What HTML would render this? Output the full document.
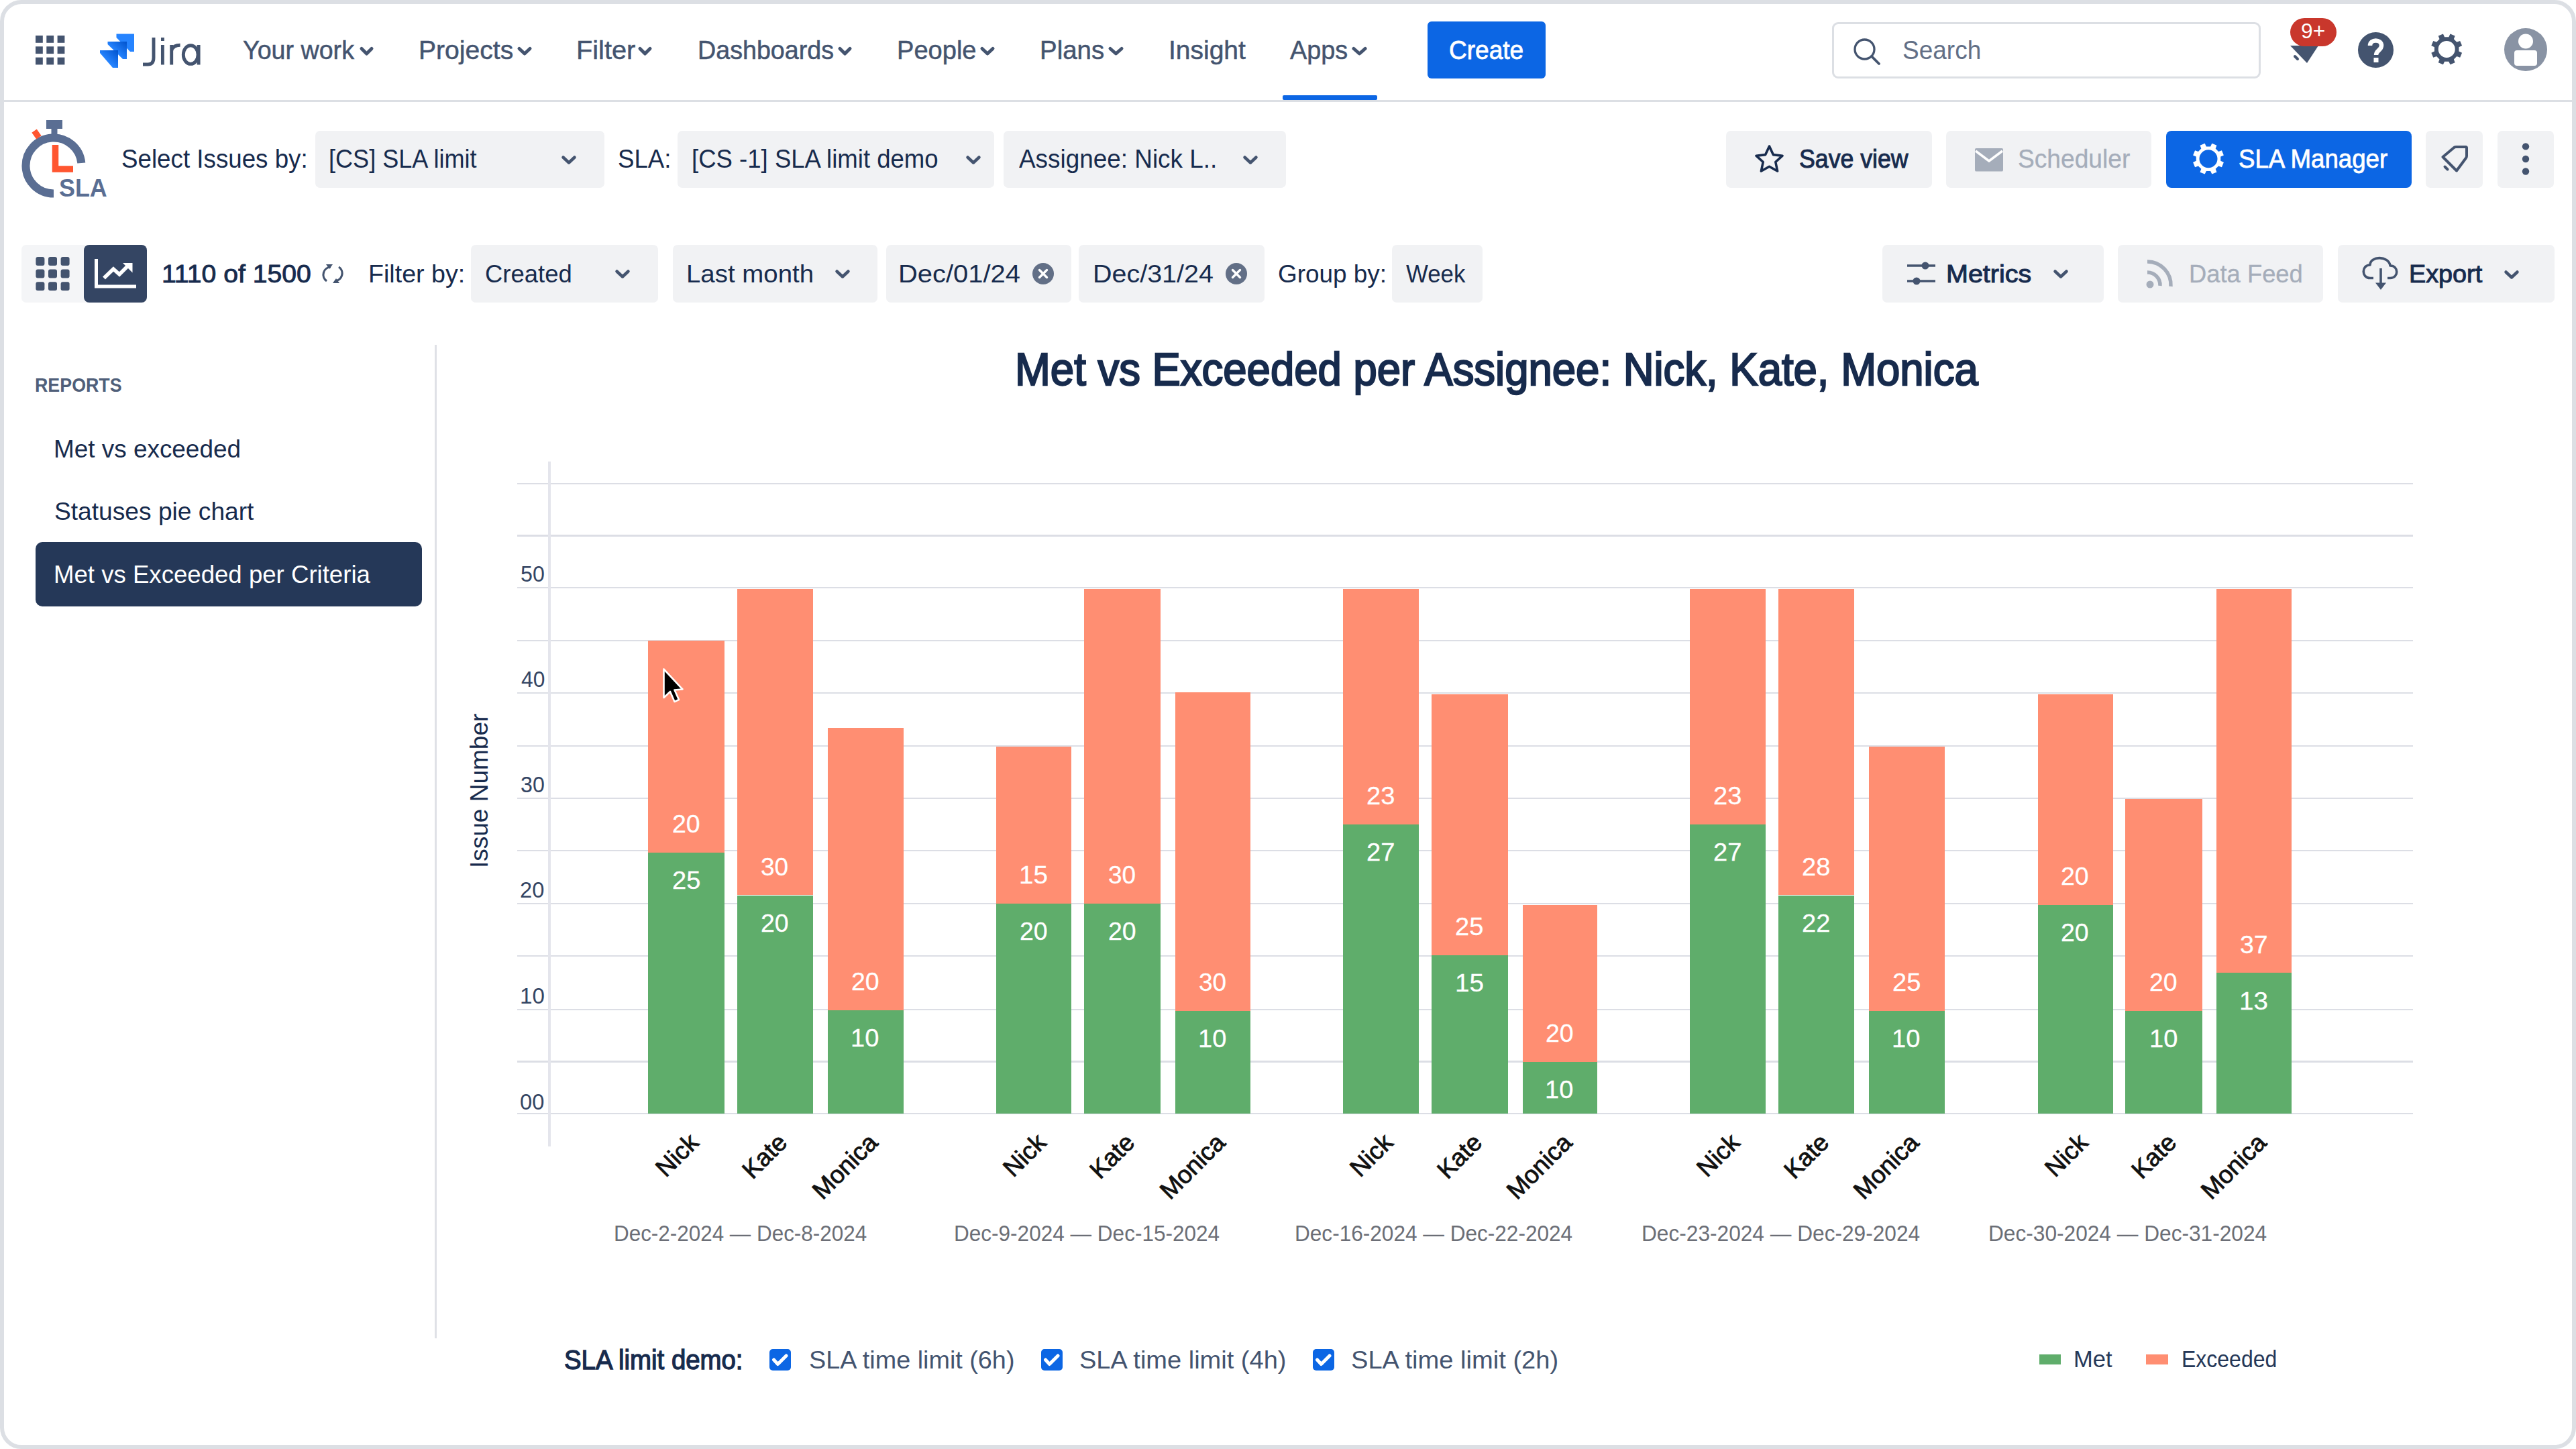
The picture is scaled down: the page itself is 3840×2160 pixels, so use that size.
<!DOCTYPE html>
<html><head><meta charset="utf-8"><title>SLA Time and Report</title>
<style>
html,body{margin:0;padding:0;background:#fff;}
body{width:3840px;height:2160px;position:relative;overflow:hidden;font-family:"Liberation Sans", sans-serif;}
.t{position:absolute;white-space:nowrap;line-height:0;transform-origin:0 0;}
svg{overflow:visible;}

</style></head><body>
<div style="position:absolute;left:2128px;top:32px;width:176px;height:85px;background:#0c66e4;border-radius:6px;"></div>
<div style="position:absolute;left:2731px;top:33px;width:633px;height:78px;border:3px solid #dcdfe4;border-radius:9px;background:#fff"></div>
<div style="position:absolute;left:469.5px;top:195px;width:431.5px;height:85px;background:#f1f2f4;border-radius:7px;"></div>
<div style="position:absolute;left:1010px;top:195px;width:472px;height:85px;background:#f1f2f4;border-radius:7px;"></div>
<div style="position:absolute;left:1496px;top:195px;width:421px;height:85px;background:#f1f2f4;border-radius:7px;"></div>
<div style="position:absolute;left:2573px;top:195px;width:307px;height:85px;background:#f1f2f4;border-radius:7px;"></div>
<div style="position:absolute;left:2901px;top:195px;width:306px;height:85px;background:#f1f2f4;border-radius:7px;"></div>
<div style="position:absolute;left:3229px;top:194.5px;width:366px;height:85.0px;background:#0c66e4;border-radius:8px;"></div>
<div style="position:absolute;left:3616px;top:195px;width:85px;height:85px;background:#f1f2f4;border-radius:7px;"></div>
<div style="position:absolute;left:3723px;top:195px;width:84px;height:85px;background:#f1f2f4;border-radius:7px;"></div>
<div style="position:absolute;left:32px;top:365px;width:186.5px;height:85.5px;background:#f4f5f7;border-radius:7px;"></div>
<div style="position:absolute;left:125px;top:365px;width:93.5px;height:85.5px;background:#344563;border-radius:8px;"></div>
<div style="position:absolute;left:702px;top:365px;width:279px;height:85.5px;background:#f1f2f4;border-radius:7px;"></div>
<div style="position:absolute;left:1003px;top:365px;width:305px;height:85.5px;background:#f1f2f4;border-radius:7px;"></div>
<div style="position:absolute;left:1321px;top:365px;width:276px;height:85.5px;background:#f1f2f4;border-radius:7px;"></div>
<div style="position:absolute;left:1608px;top:365px;width:277px;height:85.5px;background:#f1f2f4;border-radius:7px;"></div>
<div style="position:absolute;left:2075px;top:365px;width:135px;height:85.5px;background:#f1f2f4;border-radius:7px;"></div>
<div style="position:absolute;left:2806px;top:365px;width:330px;height:85.5px;background:#f1f2f4;border-radius:7px;"></div>
<div style="position:absolute;left:3157px;top:365px;width:306px;height:85.5px;background:#f1f2f4;border-radius:7px;"></div>
<div style="position:absolute;left:3485px;top:365px;width:322.5px;height:85.5px;background:#f1f2f4;border-radius:7px;"></div>
<div style="position:absolute;left:53px;top:808px;width:576px;height:96px;background:#253858;border-radius:10px;"></div>
<div style="position:absolute;left:648px;top:514px;width:3px;height:1481px;background:#dfe1e6;border-radius:0px;"></div>
<div style="position:absolute;left:3040px;top:2018.7px;width:32px;height:15.299999999999955px;background:#5fad6b;border-radius:0px;"></div>
<div style="position:absolute;left:3199px;top:2018.7px;width:33px;height:15.299999999999955px;background:#ff8e72;border-radius:0px;"></div>
<div style="position:absolute;left:0px;top:149px;width:3840px;height:2.8000000000000114px;background:#dcdfe4;border-radius:0px;"></div>
<div style="position:absolute;left:771px;top:1658.9px;width:2826px;height:2.199999999999818px;background:#dcdee5;border-radius:0px;"></div>
<div style="position:absolute;left:771px;top:1581.4px;width:2826px;height:2.199999999999818px;background:#dcdee5;border-radius:0px;"></div>
<div style="position:absolute;left:771px;top:1503.9px;width:2826px;height:2.199999999999818px;background:#dcdee5;border-radius:0px;"></div>
<div style="position:absolute;left:771px;top:1423.9px;width:2826px;height:2.199999999999818px;background:#dcdee5;border-radius:0px;"></div>
<div style="position:absolute;left:771px;top:1345.9px;width:2826px;height:2.199999999999818px;background:#dcdee5;border-radius:0px;"></div>
<div style="position:absolute;left:771px;top:1266.9px;width:2826px;height:2.199999999999818px;background:#dcdee5;border-radius:0px;"></div>
<div style="position:absolute;left:771px;top:1188.9px;width:2826px;height:2.199999999999818px;background:#dcdee5;border-radius:0px;"></div>
<div style="position:absolute;left:771px;top:1110.9px;width:2826px;height:2.199999999999818px;background:#dcdee5;border-radius:0px;"></div>
<div style="position:absolute;left:771px;top:1031.9px;width:2826px;height:2.199999999999818px;background:#dcdee5;border-radius:0px;"></div>
<div style="position:absolute;left:771px;top:953.9px;width:2826px;height:2.2000000000000455px;background:#dcdee5;border-radius:0px;"></div>
<div style="position:absolute;left:771px;top:874.9px;width:2826px;height:2.2000000000000455px;background:#dcdee5;border-radius:0px;"></div>
<div style="position:absolute;left:771px;top:797.4px;width:2826px;height:2.2000000000000455px;background:#dcdee5;border-radius:0px;"></div>
<div style="position:absolute;left:771px;top:719.9px;width:2826px;height:2.2000000000000455px;background:#dcdee5;border-radius:0px;"></div>
<div style="position:absolute;left:817px;top:688px;width:3.5px;height:1021px;background:#e4e5ec;border-radius:0px;"></div>
<div style="position:absolute;left:1912px;top:142px;width:141px;height:7px;background:#0c66e4;border-radius:2px;"></div>
<div style="position:absolute;left:966px;top:955px;width:114px;height:316px;background:#ff8e72;border-radius:0px;"></div>
<div style="position:absolute;left:966px;top:1271px;width:114px;height:389px;background:#5fad6b;border-radius:0px;"></div>
<div style="position:absolute;left:1098.5px;top:877.7px;width:113.0px;height:456.79999999999995px;background:#ff8e72;border-radius:0px;"></div>
<div style="position:absolute;left:1098.5px;top:1334.5px;width:113.0px;height:325.5px;background:#5fad6b;border-radius:0px;"></div>
<div style="position:absolute;left:1233.6px;top:1085px;width:113.10000000000014px;height:420.5px;background:#ff8e72;border-radius:0px;"></div>
<div style="position:absolute;left:1233.6px;top:1505.5px;width:113.10000000000014px;height:154.5px;background:#5fad6b;border-radius:0px;"></div>
<div style="position:absolute;left:1484.6px;top:1112.5px;width:112.40000000000009px;height:234.5px;background:#ff8e72;border-radius:0px;"></div>
<div style="position:absolute;left:1484.6px;top:1347px;width:112.40000000000009px;height:313px;background:#5fad6b;border-radius:0px;"></div>
<div style="position:absolute;left:1616px;top:877.7px;width:114px;height:469.29999999999995px;background:#ff8e72;border-radius:0px;"></div>
<div style="position:absolute;left:1616px;top:1347px;width:114px;height:313px;background:#5fad6b;border-radius:0px;"></div>
<div style="position:absolute;left:1752px;top:1032px;width:112px;height:475px;background:#ff8e72;border-radius:0px;"></div>
<div style="position:absolute;left:1752px;top:1507px;width:112px;height:153px;background:#5fad6b;border-radius:0px;"></div>
<div style="position:absolute;left:2001.7px;top:877.7px;width:113.10000000000014px;height:351.29999999999995px;background:#ff8e72;border-radius:0px;"></div>
<div style="position:absolute;left:2001.7px;top:1229px;width:113.10000000000014px;height:431px;background:#5fad6b;border-radius:0px;"></div>
<div style="position:absolute;left:2134px;top:1034.8px;width:113.5px;height:389.0px;background:#ff8e72;border-radius:0px;"></div>
<div style="position:absolute;left:2134px;top:1423.8px;width:113.5px;height:236.20000000000005px;background:#5fad6b;border-radius:0px;"></div>
<div style="position:absolute;left:2269.6px;top:1349px;width:111.30000000000018px;height:234px;background:#ff8e72;border-radius:0px;"></div>
<div style="position:absolute;left:2269.6px;top:1583px;width:111.30000000000018px;height:77px;background:#5fad6b;border-radius:0px;"></div>
<div style="position:absolute;left:2518.8px;top:877.7px;width:113.09999999999991px;height:351.29999999999995px;background:#ff8e72;border-radius:0px;"></div>
<div style="position:absolute;left:2518.8px;top:1229px;width:113.09999999999991px;height:431px;background:#5fad6b;border-radius:0px;"></div>
<div style="position:absolute;left:2651px;top:877.7px;width:113px;height:456.79999999999995px;background:#ff8e72;border-radius:0px;"></div>
<div style="position:absolute;left:2651px;top:1334.5px;width:113px;height:325.5px;background:#5fad6b;border-radius:0px;"></div>
<div style="position:absolute;left:2786px;top:1112.5px;width:112.59999999999991px;height:394.20000000000005px;background:#ff8e72;border-radius:0px;"></div>
<div style="position:absolute;left:2786px;top:1506.7px;width:112.59999999999991px;height:153.29999999999995px;background:#5fad6b;border-radius:0px;"></div>
<div style="position:absolute;left:3037.7px;top:1034.8px;width:111.90000000000009px;height:314.20000000000005px;background:#ff8e72;border-radius:0px;"></div>
<div style="position:absolute;left:3037.7px;top:1349px;width:111.90000000000009px;height:311px;background:#5fad6b;border-radius:0px;"></div>
<div style="position:absolute;left:3168px;top:1191.3px;width:115px;height:315.4000000000001px;background:#ff8e72;border-radius:0px;"></div>
<div style="position:absolute;left:3168px;top:1506.7px;width:115px;height:153.29999999999995px;background:#5fad6b;border-radius:0px;"></div>
<div style="position:absolute;left:3303.8px;top:877.7px;width:112.39999999999964px;height:572.7px;background:#ff8e72;border-radius:0px;"></div>
<div style="position:absolute;left:3303.8px;top:1450.4px;width:112.39999999999964px;height:209.5999999999999px;background:#5fad6b;border-radius:0px;"></div>
<div class="t" style="left:1001.74px;top:1229.19px;font-size:36.98px;color:#ffffff;transform:scaleX(1.0136);-webkit-text-stroke:0.3px #ffffff;">20</div>
<div class="t" style="left:1001.72px;top:1313.19px;font-size:36.98px;color:#ffffff;transform:scaleX(1.0291);-webkit-text-stroke:0.3px #ffffff;">25</div>
<div class="t" style="left:1134.35px;top:1292.69px;font-size:36.98px;color:#ffffff;transform:scaleX(0.9986);-webkit-text-stroke:0.3px #ffffff;">30</div>
<div class="t" style="left:1133.74px;top:1376.69px;font-size:36.98px;color:#ffffff;transform:scaleX(1.0136);-webkit-text-stroke:0.3px #ffffff;">20</div>
<div class="t" style="left:1268.89px;top:1463.69px;font-size:36.98px;color:#ffffff;transform:scaleX(1.0136);-webkit-text-stroke:0.3px #ffffff;">20</div>
<div class="t" style="left:1268.27px;top:1547.69px;font-size:36.98px;color:#ffffff;transform:scaleX(1.0291);-webkit-text-stroke:0.3px #ffffff;">10</div>
<div class="t" style="left:1518.88px;top:1305.19px;font-size:36.98px;color:#ffffff;transform:scaleX(1.0450);-webkit-text-stroke:0.3px #ffffff;">15</div>
<div class="t" style="left:1519.54px;top:1389.19px;font-size:36.98px;color:#ffffff;transform:scaleX(1.0136);-webkit-text-stroke:0.3px #ffffff;">20</div>
<div class="t" style="left:1652.35px;top:1305.19px;font-size:36.98px;color:#ffffff;transform:scaleX(0.9986);-webkit-text-stroke:0.3px #ffffff;">30</div>
<div class="t" style="left:1651.74px;top:1389.19px;font-size:36.98px;color:#ffffff;transform:scaleX(1.0136);-webkit-text-stroke:0.3px #ffffff;">20</div>
<div class="t" style="left:1787.35px;top:1465.19px;font-size:36.98px;color:#ffffff;transform:scaleX(0.9986);-webkit-text-stroke:0.3px #ffffff;">30</div>
<div class="t" style="left:1786.12px;top:1549.19px;font-size:36.98px;color:#ffffff;transform:scaleX(1.0291);-webkit-text-stroke:0.3px #ffffff;">10</div>
<div class="t" style="left:2036.97px;top:1187.19px;font-size:36.98px;color:#ffffff;transform:scaleX(1.0291);-webkit-text-stroke:0.3px #ffffff;">23</div>
<div class="t" style="left:2036.97px;top:1271.19px;font-size:36.98px;color:#ffffff;transform:scaleX(1.0291);-webkit-text-stroke:0.3px #ffffff;">27</div>
<div class="t" style="left:2169.47px;top:1381.99px;font-size:36.98px;color:#ffffff;transform:scaleX(1.0291);-webkit-text-stroke:0.3px #ffffff;">25</div>
<div class="t" style="left:2168.83px;top:1465.99px;font-size:36.98px;color:#ffffff;transform:scaleX(1.0450);-webkit-text-stroke:0.3px #ffffff;">15</div>
<div class="t" style="left:2303.99px;top:1541.19px;font-size:36.98px;color:#ffffff;transform:scaleX(1.0136);-webkit-text-stroke:0.3px #ffffff;">20</div>
<div class="t" style="left:2303.37px;top:1625.19px;font-size:36.98px;color:#ffffff;transform:scaleX(1.0291);-webkit-text-stroke:0.3px #ffffff;">10</div>
<div class="t" style="left:2554.07px;top:1187.19px;font-size:36.98px;color:#ffffff;transform:scaleX(1.0291);-webkit-text-stroke:0.3px #ffffff;">23</div>
<div class="t" style="left:2554.07px;top:1271.19px;font-size:36.98px;color:#ffffff;transform:scaleX(1.0291);-webkit-text-stroke:0.3px #ffffff;">27</div>
<div class="t" style="left:2686.22px;top:1292.69px;font-size:36.98px;color:#ffffff;transform:scaleX(1.0291);-webkit-text-stroke:0.3px #ffffff;">28</div>
<div class="t" style="left:2686.22px;top:1376.69px;font-size:36.98px;color:#ffffff;transform:scaleX(1.0291);-webkit-text-stroke:0.3px #ffffff;">22</div>
<div class="t" style="left:2821.02px;top:1464.89px;font-size:36.98px;color:#ffffff;transform:scaleX(1.0291);-webkit-text-stroke:0.3px #ffffff;">25</div>
<div class="t" style="left:2820.42px;top:1548.89px;font-size:36.98px;color:#ffffff;transform:scaleX(1.0291);-webkit-text-stroke:0.3px #ffffff;">10</div>
<div class="t" style="left:3072.39px;top:1307.19px;font-size:36.98px;color:#ffffff;transform:scaleX(1.0136);-webkit-text-stroke:0.3px #ffffff;">20</div>
<div class="t" style="left:3072.39px;top:1391.19px;font-size:36.98px;color:#ffffff;transform:scaleX(1.0136);-webkit-text-stroke:0.3px #ffffff;">20</div>
<div class="t" style="left:3204.24px;top:1464.89px;font-size:36.98px;color:#ffffff;transform:scaleX(1.0136);-webkit-text-stroke:0.3px #ffffff;">20</div>
<div class="t" style="left:3203.62px;top:1548.89px;font-size:36.98px;color:#ffffff;transform:scaleX(1.0291);-webkit-text-stroke:0.3px #ffffff;">10</div>
<div class="t" style="left:3339.33px;top:1408.59px;font-size:36.98px;color:#ffffff;transform:scaleX(1.0136);-webkit-text-stroke:0.3px #ffffff;">37</div>
<div class="t" style="left:3338.08px;top:1492.59px;font-size:36.98px;color:#ffffff;transform:scaleX(1.0450);-webkit-text-stroke:0.3px #ffffff;">13</div>
<div style="position:absolute;left:714.5px;top:1181.5px;width:0;height:0;"><div style="position:absolute;left:0;top:0;transform:rotate(-90deg);"><div id="ytitle" style="position:absolute;left:-112px;top:0;white-space:nowrap;line-height:0;font-size:37px;color:#172b4d;">Issue Number</div></div></div>
<div style="position:absolute;left:1035.0px;top:1697px;width:0;height:0;transform:rotate(-45deg);transform-origin:0 0;"><div style="position:absolute;right:0;top:0;white-space:nowrap;line-height:0;font-size:37px;color:#111;-webkit-text-stroke:0.9px #111;">Nick</div></div>
<div style="position:absolute;left:1167.0px;top:1697px;width:0;height:0;transform:rotate(-45deg);transform-origin:0 0;"><div style="position:absolute;right:0;top:0;white-space:nowrap;line-height:0;font-size:37px;color:#111;-webkit-text-stroke:0.9px #111;">Kate</div></div>
<div style="position:absolute;left:1302.2px;top:1697px;width:0;height:0;transform:rotate(-45deg);transform-origin:0 0;"><div style="position:absolute;right:0;top:0;white-space:nowrap;line-height:0;font-size:37px;color:#111;-webkit-text-stroke:0.9px #111;">Monica</div></div>
<div style="position:absolute;left:1552.8px;top:1697px;width:0;height:0;transform:rotate(-45deg);transform-origin:0 0;"><div style="position:absolute;right:0;top:0;white-space:nowrap;line-height:0;font-size:37px;color:#111;-webkit-text-stroke:0.9px #111;">Nick</div></div>
<div style="position:absolute;left:1685.0px;top:1697px;width:0;height:0;transform:rotate(-45deg);transform-origin:0 0;"><div style="position:absolute;right:0;top:0;white-space:nowrap;line-height:0;font-size:37px;color:#111;-webkit-text-stroke:0.9px #111;">Kate</div></div>
<div style="position:absolute;left:1820.0px;top:1697px;width:0;height:0;transform:rotate(-45deg);transform-origin:0 0;"><div style="position:absolute;right:0;top:0;white-space:nowrap;line-height:0;font-size:37px;color:#111;-webkit-text-stroke:0.9px #111;">Monica</div></div>
<div style="position:absolute;left:2070.2px;top:1697px;width:0;height:0;transform:rotate(-45deg);transform-origin:0 0;"><div style="position:absolute;right:0;top:0;white-space:nowrap;line-height:0;font-size:37px;color:#111;-webkit-text-stroke:0.9px #111;">Nick</div></div>
<div style="position:absolute;left:2202.8px;top:1697px;width:0;height:0;transform:rotate(-45deg);transform-origin:0 0;"><div style="position:absolute;right:0;top:0;white-space:nowrap;line-height:0;font-size:37px;color:#111;-webkit-text-stroke:0.9px #111;">Kate</div></div>
<div style="position:absolute;left:2337.2px;top:1697px;width:0;height:0;transform:rotate(-45deg);transform-origin:0 0;"><div style="position:absolute;right:0;top:0;white-space:nowrap;line-height:0;font-size:37px;color:#111;-webkit-text-stroke:0.9px #111;">Monica</div></div>
<div style="position:absolute;left:2587.4px;top:1697px;width:0;height:0;transform:rotate(-45deg);transform-origin:0 0;"><div style="position:absolute;right:0;top:0;white-space:nowrap;line-height:0;font-size:37px;color:#111;-webkit-text-stroke:0.9px #111;">Nick</div></div>
<div style="position:absolute;left:2719.5px;top:1697px;width:0;height:0;transform:rotate(-45deg);transform-origin:0 0;"><div style="position:absolute;right:0;top:0;white-space:nowrap;line-height:0;font-size:37px;color:#111;-webkit-text-stroke:0.9px #111;">Kate</div></div>
<div style="position:absolute;left:2854.3px;top:1697px;width:0;height:0;transform:rotate(-45deg);transform-origin:0 0;"><div style="position:absolute;right:0;top:0;white-space:nowrap;line-height:0;font-size:37px;color:#111;-webkit-text-stroke:0.9px #111;">Monica</div></div>
<div style="position:absolute;left:3105.6px;top:1697px;width:0;height:0;transform:rotate(-45deg);transform-origin:0 0;"><div style="position:absolute;right:0;top:0;white-space:nowrap;line-height:0;font-size:37px;color:#111;-webkit-text-stroke:0.9px #111;">Nick</div></div>
<div style="position:absolute;left:3237.5px;top:1697px;width:0;height:0;transform:rotate(-45deg);transform-origin:0 0;"><div style="position:absolute;right:0;top:0;white-space:nowrap;line-height:0;font-size:37px;color:#111;-webkit-text-stroke:0.9px #111;">Kate</div></div>
<div style="position:absolute;left:3372.0px;top:1697px;width:0;height:0;transform:rotate(-45deg);transform-origin:0 0;"><div style="position:absolute;right:0;top:0;white-space:nowrap;line-height:0;font-size:37px;color:#111;-webkit-text-stroke:0.9px #111;">Monica</div></div>
<div class="t" style="left:362.41px;top:74.79px;font-size:38.12px;color:#44546f;transform:scaleX(0.9876);-webkit-text-stroke:0.5px #44546f;">Your work</div>
<div class="t" style="left:623.94px;top:74.79px;font-size:38.12px;color:#44546f;transform:scaleX(1.0261);-webkit-text-stroke:0.5px #44546f;">Projects</div>
<div class="t" style="left:858.90px;top:74.79px;font-size:38.12px;color:#44546f;transform:scaleX(1.0425);-webkit-text-stroke:0.5px #44546f;">Filter</div>
<div class="t" style="left:1040.06px;top:74.79px;font-size:38.12px;color:#44546f;transform:scaleX(0.9883);-webkit-text-stroke:0.5px #44546f;">Dashboards</div>
<div class="t" style="left:1337.03px;top:74.79px;font-size:38.12px;color:#44546f;transform:scaleX(0.9986);-webkit-text-stroke:0.5px #44546f;">People</div>
<div class="t" style="left:1550.00px;top:74.79px;font-size:38.12px;color:#44546f;transform:scaleX(1.0090);-webkit-text-stroke:0.5px #44546f;">Plans</div>
<div class="t" style="left:1741.95px;top:74.79px;font-size:38.12px;color:#44546f;transform:scaleX(1.0233);-webkit-text-stroke:0.5px #44546f;">Insight</div>
<div class="t" style="left:1923.00px;top:74.79px;font-size:38.12px;color:#44546f;transform:scaleX(0.9920);-webkit-text-stroke:0.5px #44546f;">Apps</div>
<div class="t" style="left:2160.26px;top:74.79px;font-size:38.12px;color:#ffffff;transform:scaleX(0.9724);-webkit-text-stroke:0.8px #ffffff;">Create</div>
<div class="t" style="left:2835.84px;top:74.79px;font-size:38.12px;color:#626f86;transform:scaleX(0.9707);">Search</div>
<div class="t" style="left:88.44px;top:280.44px;font-size:37.69px;font-weight:bold;color:#5a6e93;transform:scaleX(0.9518);">SLA</div>
<div class="t" style="left:181.25px;top:237.20px;font-size:38.68px;color:#172b4d;transform:scaleX(0.9499);">Select Issues by:</div>
<div class="t" style="left:490.24px;top:237.20px;font-size:38.68px;color:#172b4d;transform:scaleX(0.9331);">[CS] SLA limit</div>
<div class="t" style="left:920.85px;top:237.20px;font-size:38.68px;color:#172b4d;transform:scaleX(0.9474);">SLA:</div>
<div class="t" style="left:1030.72px;top:237.20px;font-size:38.68px;color:#172b4d;transform:scaleX(0.9451);">[CS -1] SLA limit demo</div>
<div class="t" style="left:1519.00px;top:237.20px;font-size:38.68px;color:#172b4d;transform:scaleX(0.9539);">Assignee: Nick L..</div>
<div class="t" style="left:2681.88px;top:237.20px;font-size:38.68px;color:#172b4d;transform:scaleX(0.9227);-webkit-text-stroke:1.0px #172b4d;">Save view</div>
<div class="t" style="left:3007.84px;top:237.20px;font-size:38.68px;color:#a5adba;transform:scaleX(0.9607);-webkit-text-stroke:0.3px #a5adba;">Scheduler</div>
<div class="t" style="left:3336.85px;top:237.20px;font-size:38.68px;color:#ffffff;transform:scaleX(0.9483);-webkit-text-stroke:0.8px #ffffff;">SLA Manager</div>
<div class="t" style="left:240.55px;top:407.94px;font-size:37.69px;color:#172b4d;transform:scaleX(1.0394);-webkit-text-stroke:0.9px #172b4d;">1110 of 1500</div>
<div class="t" style="left:549.06px;top:407.94px;font-size:37.69px;color:#172b4d;transform:scaleX(0.9989);">Filter by:</div>
<div class="t" style="left:723.29px;top:407.94px;font-size:37.69px;color:#172b4d;transform:scaleX(0.9677);">Created</div>
<div class="t" style="left:1023.00px;top:407.94px;font-size:37.69px;color:#172b4d;transform:scaleX(1.0199);">Last month</div>
<div class="t" style="left:1338.88px;top:407.94px;font-size:37.69px;color:#172b4d;transform:scaleX(1.0600);">Dec/01/24</div>
<div class="t" style="left:1628.62px;top:407.94px;font-size:37.69px;color:#172b4d;transform:scaleX(1.0475);">Dec/31/24</div>
<div class="t" style="left:1905.27px;top:407.94px;font-size:37.69px;color:#172b4d;transform:scaleX(0.9793);">Group by:</div>
<div class="t" style="left:2096.00px;top:407.94px;font-size:37.69px;color:#172b4d;transform:scaleX(0.9247);">Week</div>
<div class="t" style="left:2900.61px;top:407.94px;font-size:37.69px;color:#172b4d;transform:scaleX(1.0484);-webkit-text-stroke:1.0px #172b4d;">Metrics</div>
<div class="t" style="left:3263.16px;top:407.94px;font-size:37.69px;color:#a5adba;transform:scaleX(0.9653);-webkit-text-stroke:0.3px #a5adba;">Data Feed</div>
<div class="t" style="left:3591.05px;top:407.94px;font-size:37.69px;color:#172b4d;transform:scaleX(1.0027);-webkit-text-stroke:1.0px #172b4d;">Export</div>
<div class="t" style="left:52.32px;top:573.55px;font-size:28.73px;font-weight:bold;color:#505f79;transform:scaleX(0.9338);">REPORTS</div>
<div class="t" style="left:79.82px;top:669.04px;font-size:37.40px;color:#172b4d;transform:scaleX(0.9869);">Met vs exceeded</div>
<div class="t" style="left:81.34px;top:761.94px;font-size:37.69px;color:#172b4d;transform:scaleX(0.9863);">Statuses pie chart</div>
<div class="t" style="left:79.64px;top:855.94px;font-size:37.69px;color:#ffffff;transform:scaleX(0.9715);">Met vs Exceeded per Criteria</div>
<div class="t" style="left:1513.04px;top:550.35px;font-size:68.27px;color:#172b4d;transform:scaleX(0.9299);-webkit-text-stroke:2.4px #172b4d;">Met vs Exceeded per Assignee: Nick, Kate, Monica</div>
<div class="t" style="left:775.48px;top:1641.67px;font-size:34.13px;color:#344563;transform:scaleX(0.9570);">00</div>
<div class="t" style="left:774.93px;top:1484.17px;font-size:34.13px;color:#344563;transform:scaleX(0.9719);">10</div>
<div class="t" style="left:775.47px;top:1326.17px;font-size:34.13px;color:#344563;transform:scaleX(0.9573);">20</div>
<div class="t" style="left:775.99px;top:1169.17px;font-size:34.13px;color:#344563;transform:scaleX(0.9431);">30</div>
<div class="t" style="left:776.50px;top:1012.17px;font-size:34.13px;color:#344563;transform:scaleX(0.9294);">40</div>
<div class="t" style="left:775.99px;top:855.17px;font-size:34.13px;color:#344563;transform:scaleX(0.9431);">50</div>
<div class="t" style="left:914.55px;top:1838.17px;font-size:34.13px;color:#6b6e76;transform:scaleX(0.9205);">Dec-2-2024 — Dec-8-2024</div>
<div class="t" style="left:1421.54px;top:1838.17px;font-size:34.13px;color:#6b6e76;transform:scaleX(0.9241);">Dec-9-2024 — Dec-15-2024</div>
<div class="t" style="left:1929.53px;top:1838.17px;font-size:34.13px;color:#6b6e76;transform:scaleX(0.9252);">Dec-16-2024 — Dec-22-2024</div>
<div class="t" style="left:2446.53px;top:1838.17px;font-size:34.13px;color:#6b6e76;transform:scaleX(0.9274);">Dec-23-2024 — Dec-29-2024</div>
<div class="t" style="left:2963.53px;top:1838.17px;font-size:34.13px;color:#6b6e76;transform:scaleX(0.9274);">Dec-30-2024 — Dec-31-2024</div>
<div class="t" style="left:840.80px;top:2027.20px;font-size:39.82px;color:#172b4d;transform:scaleX(0.9635);-webkit-text-stroke:1.3px #172b4d;">SLA limit demo:</div>
<div class="t" style="left:1206.42px;top:2026.59px;font-size:37.55px;color:#44546f;transform:scaleX(1.0060);">SLA time limit (6h)</div>
<div class="t" style="left:1609.41px;top:2026.59px;font-size:37.55px;color:#44546f;transform:scaleX(1.0126);">SLA time limit (4h)</div>
<div class="t" style="left:2014.31px;top:2026.59px;font-size:37.55px;color:#44546f;transform:scaleX(1.0149);">SLA time limit (2h)</div>
<div class="t" style="left:3091.30px;top:2025.68px;font-size:35.56px;color:#253858;transform:scaleX(0.9715);">Met</div>
<div class="t" style="left:3251.50px;top:2025.68px;font-size:35.56px;color:#253858;transform:scaleX(0.8998);">Exceeded</div>
<svg style="position:absolute;left:0px;top:0px;" width="120" height="120" viewBox="0 0 120 120"><rect x="53.0" y="53.0" width="10.8" height="10.8" fill="#44546f"/><rect x="53.0" y="69.3" width="10.8" height="10.8" fill="#44546f"/><rect x="53.0" y="85.6" width="10.8" height="10.8" fill="#44546f"/><rect x="69.3" y="53.0" width="10.8" height="10.8" fill="#44546f"/><rect x="69.3" y="69.3" width="10.8" height="10.8" fill="#44546f"/><rect x="69.3" y="85.6" width="10.8" height="10.8" fill="#44546f"/><rect x="85.6" y="53.0" width="10.8" height="10.8" fill="#44546f"/><rect x="85.6" y="69.3" width="10.8" height="10.8" fill="#44546f"/><rect x="85.6" y="85.6" width="10.8" height="10.8" fill="#44546f"/></svg>
<svg style="position:absolute;left:0px;top:0px;" width="210" height="110" viewBox="0 0 210 110"><defs><linearGradient id="jg" x1="1" y1="0" x2="0" y2="1"><stop offset="0" stop-color="#0052cc"/><stop offset="0.6" stop-color="#2684ff"/></linearGradient></defs>
<polygon points="173.5,50.5 200,50.5 200,77 194,77 173.5,56" fill="#2684ff"/>
<polygon points="160.5,62 189,62 189,88 183,88 160.5,66" fill="url(#jg)"/>
<polygon points="149,75 176,75 176,101 168,101 149,79" fill="url(#jg)"/></svg>
<svg style="position:absolute;left:0px;top:0px;" width="10" height="10" viewBox="0 0 10 10"><g fill="none" stroke="#44546f" stroke-width="4.9">
<path d="M229,56 V86 C229,93.5 225.5,96 220.5,96 H213"/>
<path d="M242.4,67 V96.5"/><path d="M255.7,67 V96.5 M255.7,76 C257,69.5 262,67.3 268.6,67.3"/>
<ellipse cx="284.2" cy="81.6" rx="10.9" ry="13.8"/><path d="M296.1,67 V96.5"/></g>
<rect x="240" y="56" width="4.9" height="5" fill="#44546f"/></svg>
<svg style="position:absolute;left:536px;top:68.5px;" width="21" height="14" viewBox="0 0 21 14"><polyline points="3,3.5 10.5,11 18,3.5" fill="none" stroke="#44546f" stroke-width="5" stroke-linecap="round" stroke-linejoin="round"/></svg>
<svg style="position:absolute;left:771px;top:68.5px;" width="22" height="14" viewBox="0 0 22 14"><polyline points="3,3.5 11.0,11 19,3.5" fill="none" stroke="#44546f" stroke-width="5" stroke-linecap="round" stroke-linejoin="round"/></svg>
<svg style="position:absolute;left:951px;top:68.5px;" width="21" height="14" viewBox="0 0 21 14"><polyline points="3,3.5 10.5,11 18,3.5" fill="none" stroke="#44546f" stroke-width="5" stroke-linecap="round" stroke-linejoin="round"/></svg>
<svg style="position:absolute;left:1249px;top:68.5px;" width="21" height="14" viewBox="0 0 21 14"><polyline points="3,3.5 10.5,11 18,3.5" fill="none" stroke="#44546f" stroke-width="5" stroke-linecap="round" stroke-linejoin="round"/></svg>
<svg style="position:absolute;left:1461px;top:68.5px;" width="22" height="14" viewBox="0 0 22 14"><polyline points="3,3.5 11.0,11 19,3.5" fill="none" stroke="#44546f" stroke-width="5" stroke-linecap="round" stroke-linejoin="round"/></svg>
<svg style="position:absolute;left:1652px;top:68.5px;" width="23" height="14" viewBox="0 0 23 14"><polyline points="3,3.5 11.5,11 20,3.5" fill="none" stroke="#44546f" stroke-width="5" stroke-linecap="round" stroke-linejoin="round"/></svg>
<svg style="position:absolute;left:2015px;top:68.5px;" width="23" height="14" viewBox="0 0 23 14"><polyline points="3,3.5 11.5,11 20,3.5" fill="none" stroke="#44546f" stroke-width="5" stroke-linecap="round" stroke-linejoin="round"/></svg>
<svg style="position:absolute;left:2760px;top:54px;" width="48" height="48" viewBox="0 0 48 48"><circle cx="19.5" cy="19.5" r="14.5" fill="none" stroke="#44546f" stroke-width="3.3"/><line x1="30" y1="30" x2="41" y2="41" stroke="#44546f" stroke-width="3.8" stroke-linecap="round"/></svg>
<svg style="position:absolute;left:3405px;top:20px;" width="90" height="90" viewBox="0 0 90 90"><path d="M9,48 L51,48 L34,74 Z" fill="#44546f"/><line x1="16" y1="64" x2="20" y2="68" stroke="#44546f" stroke-width="4" stroke-linecap="round"/>
<rect x="9" y="7" width="69" height="42" rx="21" fill="#c9372c"/></svg>
<svg style="position:absolute;left:3514px;top:47px;" width="56" height="56" viewBox="0 0 56 56"><circle cx="27.5" cy="27.5" r="26.5" fill="#44546f"/><path d="M19,21 C19,11 36,11 36,21 C36,28 28,28 28,35" fill="none" stroke="#fff" stroke-width="6.5"/><rect x="24.5" y="39" width="7" height="7" fill="#fff"/></svg>
<svg style="position:absolute;left:0px;top:0px;" width="10" height="10" viewBox="0 0 10 10"><path fill-rule="evenodd" fill="#44546f" d="M3650.33,55.17 L3652.51,50.51 L3659.64,53.46 L3657.88,58.29 L3662.31,62.72 L3667.14,60.96 L3670.09,68.09 L3665.43,70.27 L3665.43,76.53 L3670.09,78.71 L3667.14,85.84 L3662.31,84.08 L3657.88,88.51 L3659.64,93.34 L3652.51,96.29 L3650.33,91.63 L3644.07,91.63 L3641.89,96.29 L3634.76,93.34 L3636.52,88.51 L3632.09,84.08 L3627.26,85.84 L3624.31,78.71 L3628.97,76.53 L3628.97,70.27 L3624.31,68.09 L3627.26,60.96 L3632.09,62.72 L3636.52,58.29 L3634.76,53.46 L3641.89,50.51 L3644.07,55.17 Z M3659.70,73.40 A12.5,12.5 0 1 0 3634.70,73.40 A12.5,12.5 0 1 0 3659.70,73.40 Z"/></svg>
<svg style="position:absolute;left:3733px;top:42px;" width="64" height="64" viewBox="0 0 64 64"><circle cx="32" cy="32" r="32" fill="#8993a4"/><circle cx="32" cy="19.5" r="11" fill="#fff"/><rect x="15" y="33" width="34" height="23" rx="4" fill="#fff"/></svg>
<svg style="position:absolute;left:0px;top:0px;" width="10" height="10" viewBox="0 0 10 10">
<path d="M 121.3,243 A 41.5 41.5 0 1 0 80,288.5" fill="none" stroke="#5a6e93" stroke-width="12"/>
<rect x="69" y="179" width="24" height="13" fill="#5a6e93"/><rect x="76.5" y="190" width="9" height="12" fill="#5a6e93"/>
<rect x="50" y="194" width="9" height="12" fill="#ff5630" transform="rotate(-35 54.5 200)"/>
<path d="M82.5,216 L82.5,252 L109,252" fill="none" stroke="#ff5630" stroke-width="9.5"/></svg>
<svg style="position:absolute;left:837px;top:231.5px;" width="22" height="14" viewBox="0 0 22 14"><polyline points="2.5,2.5 11,10.5 19.5,2.5" fill="none" stroke="#44546f" stroke-width="4.5" stroke-linecap="round" stroke-linejoin="round"/></svg>
<svg style="position:absolute;left:1440px;top:231.5px;" width="22" height="14" viewBox="0 0 22 14"><polyline points="2.5,2.5 11,10.5 19.5,2.5" fill="none" stroke="#44546f" stroke-width="4.5" stroke-linecap="round" stroke-linejoin="round"/></svg>
<svg style="position:absolute;left:1853px;top:231.5px;" width="22" height="14" viewBox="0 0 22 14"><polyline points="2.5,2.5 11,10.5 19.5,2.5" fill="none" stroke="#44546f" stroke-width="4.5" stroke-linecap="round" stroke-linejoin="round"/></svg>
<svg style="position:absolute;left:2614px;top:214px;" width="48" height="48" viewBox="0 0 48 48"><path d="M23.5,4 L29.3,16.6 L43,18.2 L32.8,27.5 L35.6,41 L23.5,34.2 L11.4,41 L14.2,27.5 L4,18.2 L17.7,16.6 Z" fill="none" stroke="#172b4d" stroke-width="3.6" stroke-linejoin="round"/></svg>
<svg style="position:absolute;left:2944px;top:221px;" width="43" height="35" viewBox="0 0 43 35"><rect x="0" y="0" width="42" height="34.5" rx="2" fill="#a5adba"/><polyline points="1,4 21,19 41,4" fill="none" stroke="#ffffff" stroke-width="3.5"/></svg>
<svg style="position:absolute;left:0px;top:0px;" width="10" height="10" viewBox="0 0 10 10"><path fill-rule="evenodd" fill="#ffffff" d="M3295.13,218.47 L3297.31,213.81 L3304.44,216.76 L3302.68,221.59 L3307.11,226.02 L3311.94,224.26 L3314.89,231.39 L3310.23,233.57 L3310.23,239.83 L3314.89,242.01 L3311.94,249.14 L3307.11,247.38 L3302.68,251.81 L3304.44,256.64 L3297.31,259.59 L3295.13,254.93 L3288.87,254.93 L3286.69,259.59 L3279.56,256.64 L3281.32,251.81 L3276.89,247.38 L3272.06,249.14 L3269.11,242.01 L3273.77,239.83 L3273.77,233.57 L3269.11,231.39 L3272.06,224.26 L3276.89,226.02 L3281.32,221.59 L3279.56,216.76 L3286.69,213.81 L3288.87,218.47 Z M3305.50,236.70 A13.5,13.5 0 1 0 3278.50,236.70 A13.5,13.5 0 1 0 3305.50,236.70 Z"/></svg>
<svg style="position:absolute;left:0px;top:0px;" width="10" height="10" viewBox="0 0 10 10"><path d="M3641.5,234 L3657.5,220.5 Q3659,219 3661,219 L3675.5,219 Q3677,219 3677,220.5 L3677,232.5 Q3677,234 3676,235.5 L3662,254.5 Z" fill="none" stroke="#44546f" stroke-width="4" stroke-linejoin="round"/><path d="M3644.5,248.5 L3648.5,252.5" stroke="#44546f" stroke-width="4" stroke-linecap="round"/></svg>
<svg style="position:absolute;left:3755px;top:208px;" width="20" height="60" viewBox="0 0 20 60"><circle cx="10" cy="10.4" r="5.2" fill="#44546f"/><circle cx="10" cy="29" r="5.2" fill="#44546f"/><circle cx="10" cy="47.5" r="5.2" fill="#44546f"/></svg>
<svg style="position:absolute;left:0px;top:0px;" width="10" height="10" viewBox="0 0 10 10"><rect x="53.4" y="383.0" width="13" height="13" rx="3" fill="#44546f"/><rect x="53.4" y="401.6" width="13" height="13" rx="3" fill="#44546f"/><rect x="53.4" y="420.2" width="13" height="13" rx="3" fill="#44546f"/><rect x="72.0" y="383.0" width="13" height="13" rx="3" fill="#44546f"/><rect x="72.0" y="401.6" width="13" height="13" rx="3" fill="#44546f"/><rect x="72.0" y="420.2" width="13" height="13" rx="3" fill="#44546f"/><rect x="90.6" y="383.0" width="13" height="13" rx="3" fill="#44546f"/><rect x="90.6" y="401.6" width="13" height="13" rx="3" fill="#44546f"/><rect x="90.6" y="420.2" width="13" height="13" rx="3" fill="#44546f"/></svg>
<svg style="position:absolute;left:0px;top:0px;" width="10" height="10" viewBox="0 0 10 10"><polyline points="143.5,386 143.5,427 203,427" fill="none" stroke="#fff" stroke-width="5"/>
<polyline points="155,414.5 169,401 178,409 190,397" fill="none" stroke="#fff" stroke-width="5.5" stroke-linejoin="miter"/>
<polygon points="183,392 197.5,392 197.5,406.5" fill="#fff"/></svg>
<svg style="position:absolute;left:0px;top:0px;" width="10" height="10" viewBox="0 0 10 10"><path d="M 493,398 A 11.5 11.5 0 0 0 487,419" fill="none" stroke="#44546f" stroke-width="3.2"/>
<path d="M 499,419 A 11.5 11.5 0 0 0 505,398" fill="none" stroke="#44546f" stroke-width="3.2"/>
<polygon points="486,394 496,394 491,401" fill="#44546f"/><polygon points="496,422 506,422 501,415" fill="#44546f"/></svg>
<svg style="position:absolute;left:917px;top:402px;" width="22" height="14" viewBox="0 0 22 14"><polyline points="2.5,2.5 11,10.5 19.5,2.5" fill="none" stroke="#44546f" stroke-width="4.5" stroke-linecap="round" stroke-linejoin="round"/></svg>
<svg style="position:absolute;left:1245px;top:402px;" width="22" height="14" viewBox="0 0 22 14"><polyline points="2.5,2.5 11,10.5 19.5,2.5" fill="none" stroke="#44546f" stroke-width="4.5" stroke-linecap="round" stroke-linejoin="round"/></svg>
<svg style="position:absolute;left:1537.5px;top:390.7px;" width="34" height="34" viewBox="0 0 34 34"><circle cx="17" cy="17" r="16" fill="#626f86"/><path d="M11.5,11.5 L22.5,22.5 M22.5,11.5 L11.5,22.5" stroke="#fff" stroke-width="3.4" stroke-linecap="round"/></svg>
<svg style="position:absolute;left:1825.6px;top:390.7px;" width="34" height="34" viewBox="0 0 34 34"><circle cx="17" cy="17" r="16" fill="#626f86"/><path d="M11.5,11.5 L22.5,22.5 M22.5,11.5 L11.5,22.5" stroke="#fff" stroke-width="3.4" stroke-linecap="round"/></svg>
<svg style="position:absolute;left:0px;top:0px;" width="10" height="10" viewBox="0 0 10 10"><line x1="2843" y1="396" x2="2885" y2="396" stroke="#44546f" stroke-width="3.4"/><circle cx="2870" cy="396" r="5.5" fill="#44546f"/>
<line x1="2843" y1="419" x2="2885" y2="419" stroke="#44546f" stroke-width="3.4"/><circle cx="2857" cy="419" r="5.5" fill="#44546f"/></svg>
<svg style="position:absolute;left:3061px;top:402px;" width="22" height="14" viewBox="0 0 22 14"><polyline points="2.5,2.5 11,10.5 19.5,2.5" fill="none" stroke="#44546f" stroke-width="4.5" stroke-linecap="round" stroke-linejoin="round"/></svg>
<svg style="position:absolute;left:0px;top:0px;" width="10" height="10" viewBox="0 0 10 10"><circle cx="3205" cy="424" r="5.5" fill="#a5adba"/>
<path d="M3201,406 A 19 19 0 0 1 3220,426" fill="none" stroke="#a5adba" stroke-width="5.5"/>
<path d="M3201,390 A 35 35 0 0 1 3236,427" fill="none" stroke="#a5adba" stroke-width="5.5"/></svg>
<svg style="position:absolute;left:0px;top:0px;" width="10" height="10" viewBox="0 0 10 10"><path d="M3538,414.5 L3533,414.5 C3520,414.5 3520,395 3533,395 C3533,381 3561,381 3563,396 C3576,396 3576,414.5 3563,414.5 L3559,414.5" fill="none" stroke="#44546f" stroke-width="3.6" stroke-linejoin="round"/>
<line x1="3549" y1="400" x2="3549" y2="426" stroke="#44546f" stroke-width="3.6"/><polygon points="3541,421.5 3557,421.5 3549,432" fill="#44546f"/></svg>
<svg style="position:absolute;left:3733px;top:403px;" width="22" height="14" viewBox="0 0 22 14"><polyline points="2.5,2.5 11,10.5 19.5,2.5" fill="none" stroke="#44546f" stroke-width="4.5" stroke-linecap="round" stroke-linejoin="round"/></svg>
<svg style="position:absolute;left:1146.7px;top:2010.5px;" width="32" height="32" viewBox="0 0 32 32"><rect x="0" y="0" width="32" height="32" rx="5" fill="#0c66e4"/><polyline points="6.5,16 12.5,22.5 25,10" fill="none" stroke="#fff" stroke-width="5" stroke-linecap="round" stroke-linejoin="round"/></svg>
<svg style="position:absolute;left:1551.5px;top:2010.5px;" width="32" height="32" viewBox="0 0 32 32"><rect x="0" y="0" width="32" height="32" rx="5" fill="#0c66e4"/><polyline points="6.5,16 12.5,22.5 25,10" fill="none" stroke="#fff" stroke-width="5" stroke-linecap="round" stroke-linejoin="round"/></svg>
<svg style="position:absolute;left:1956.5px;top:2010.5px;" width="32" height="32" viewBox="0 0 32 32"><rect x="0" y="0" width="32" height="32" rx="5" fill="#0c66e4"/><polyline points="6.5,16 12.5,22.5 25,10" fill="none" stroke="#fff" stroke-width="5" stroke-linecap="round" stroke-linejoin="round"/></svg>
<div class="t" style="left:3430.01px;top:47.16px;font-size:31.29px;color:#ffffff;transform:scaleX(1.0137);">9+</div>
<svg style="position:absolute;left:0px;top:0px;" width="10" height="10" viewBox="0 0 10 10"><path d="M989.5,997.5 L989.5,1040 L999,1031 L1005.5,1046 L1012,1043 L1005.5,1028.5 L1017.5,1027.5 Z" fill="#000" stroke="#fff" stroke-width="2.6" stroke-linejoin="round"/></svg>
<div style="position:absolute;left:0;top:0;width:3828px;height:2148px;border:6px solid #dcdfe4;border-radius:32px;"></div>
</body></html>
